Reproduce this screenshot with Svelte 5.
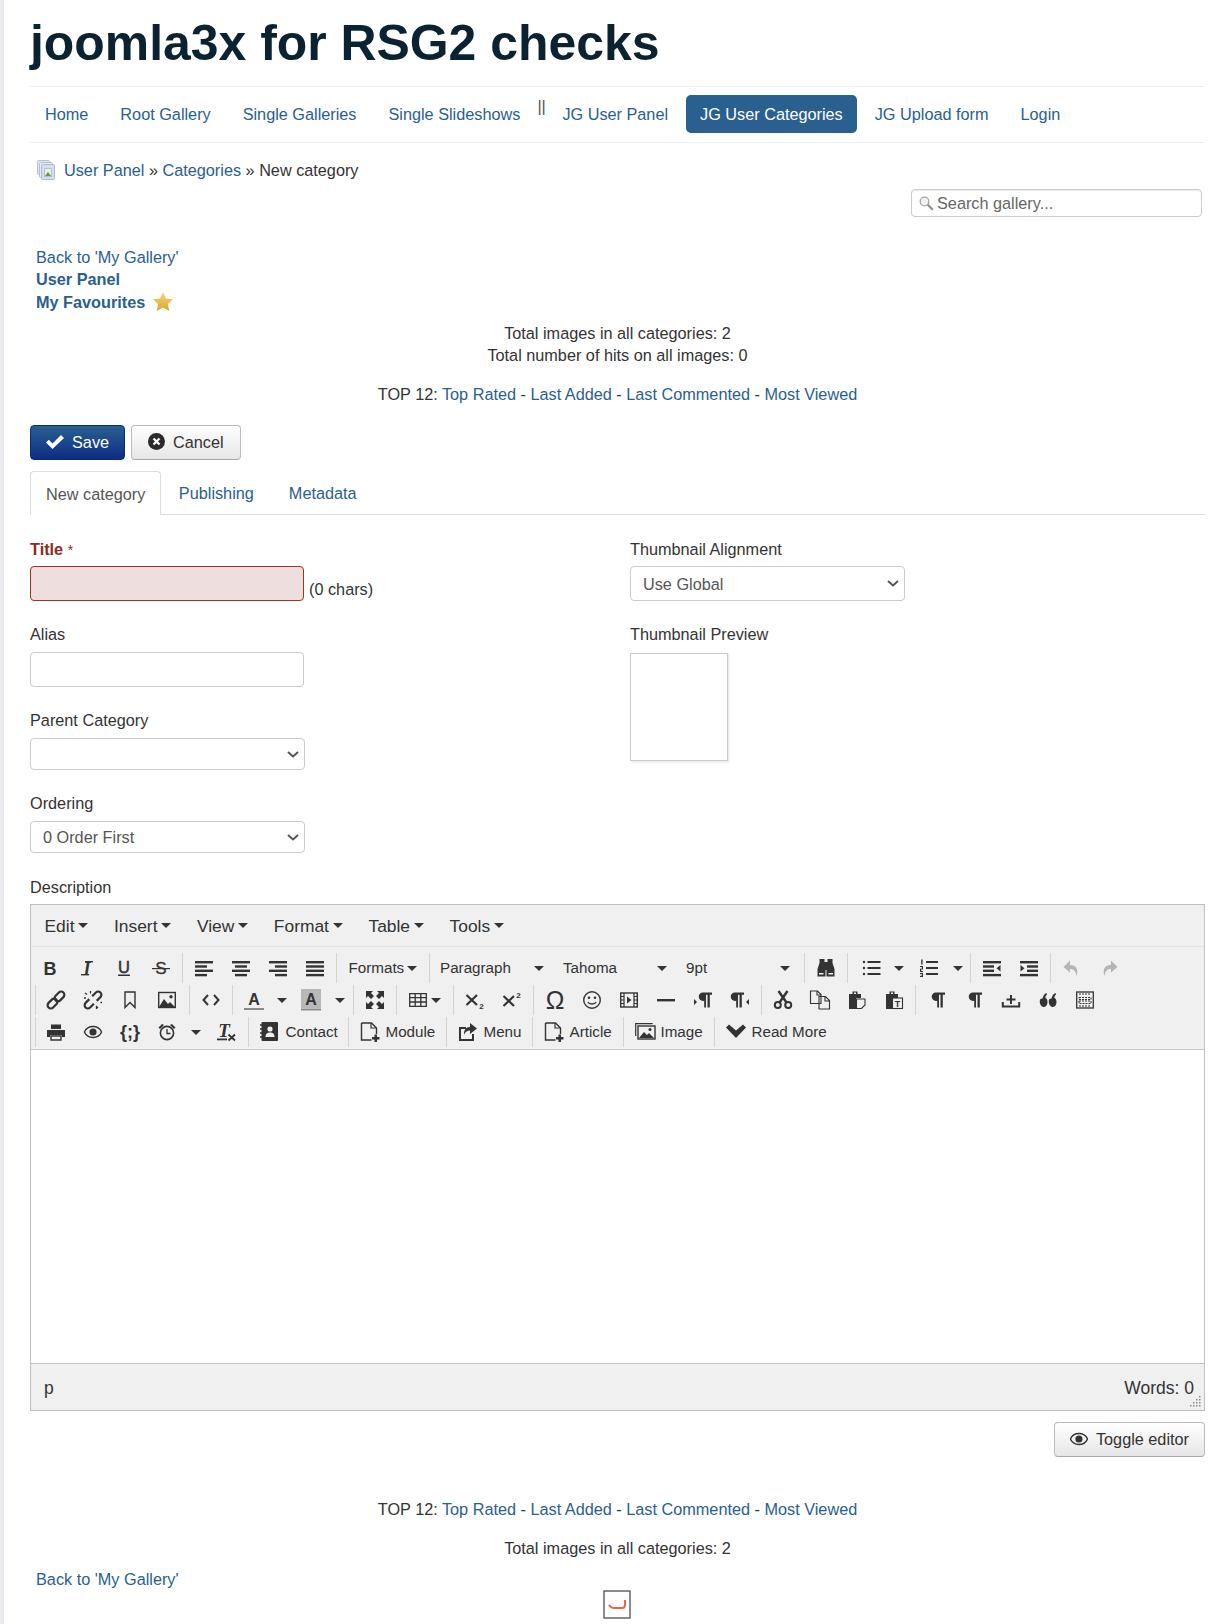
<script>
  const sans = 'font-family="Liberation Sans, Arial, sans-serif"';
  const txt = (s, x, y, size, extra = '') => `<text x="${x}" y="${y}" font-size="${size}" text-anchor="middle" ${sans} ${extra}>${s}</text>`;
  const bars = (rows) => rows.map(([x, y, w, h = 2.4]) => `<rect x="${x}" y="${y}" width="${w}" height="${h}"/>`).join('');
  const doc = '<path d="M1.5 1h10l5 5v6M1.5 1v17h10" fill="none" stroke="#333" stroke-width="1.4"/><path d="M11 1v5h5" fill="none" stroke="#333" stroke-width="1.2"/><path d="M12 15h2.5v-2.5h2.5V15h2.5v2.5H17V20h-2.5v-2.5H12z"/>';
  const chain = '<g transform="rotate(-45 9 9)" fill="none" stroke="#333" stroke-width="2.2"><rect x="-1.5" y="5.8" width="11" height="6.4" rx="3.2"/><rect x="8.5" y="5.8" width="11" height="6.4" rx="3.2"/></g>';
  const pilcrow = '<path d="M7 1.5h10v2.300h-2.200V16.500h-2.300V3.800h-1.500V16.500H9.200V9.800A4.200 4.100 0 0 1 7 1.500z"/>';

  const icons = {
    bold: txt('B', 9, 15.5, 18, 'font-weight="700"'),
    italic: `<text x="9" y="15.5" font-size="18" text-anchor="middle" font-family="Liberation Serif, serif" font-style="italic" font-weight="700">I</text><rect x="3" y="15" width="8" height="1.4"/><rect x="7" y="2" width="8" height="1.4"/>`,
    underline: txt('U', 9, 13.5, 16.5, 'font-weight="400" stroke="#333" stroke-width=".5"') + bars([[3, 15.5, 12, 1.5]]),
    strike: txt('S', 9, 15, 17, 'stroke="#333" stroke-width=".3"') + bars([[0, 9, 18, 1.2]]),
    alignleft: bars([[0, 2, 18], [0, 6.3, 12], [0, 10.6, 18], [0, 14.9, 12]]),
    aligncenter: bars([[0, 2, 18], [3, 6.3, 12], [0, 10.6, 18], [3, 14.9, 12]]),
    alignright: bars([[0, 2, 18], [6, 6.3, 12], [0, 10.6, 18], [6, 14.9, 12]]),
    justify: bars([[0, 2, 18], [0, 6.3, 18], [0, 10.6, 18], [0, 14.9, 18]]),
    binoculars: '<path d="M2.5 0h5v3h3V0h5v4l2 6v7.500h-8V11h-1v6.500H.5V10l2-6z"/><rect x="2" y="14" width="4.500" height="1.500" fill="#f0f0f0"/><rect x="11.500" y="14" width="4.500" height="1.500" fill="#f0f0f0"/>',
    bullist: '<g transform="translate(2.500 0)"><circle cx="1.5" cy="3" r="1.2"/><circle cx="1.5" cy="9" r="1.2"/><circle cx="1.5" cy="15" r="1.2"/>' + bars([[5, 2, 13, 2], [5, 8, 13, 2], [5, 14, 13, 2]]) + '</g>',
    numlist: '<g transform="translate(-1 0)"><rect x="1.2" y="0.5" width="1.4" height="5"/><path d="M0 7h3v3.5H1.2V12H3v1H0V9.8h1.8V8H0zM0 14h3v4H0v-.9h2v-.7H.7v-.7H2v-.8H0z"/>' + bars([[6, 2, 12, 2], [6, 8, 12, 2], [6, 14, 12, 2]]) + '</g>',
    outdent: bars([[0, 2, 18], [0, 6.3, 11], [0, 10.6, 11], [0, 14.9, 18]]) + '<path d="M17.5 6l-4 3.2 4 3.2z"/>',
    indent: bars([[0, 2, 18], [7, 6.3, 11], [7, 10.6, 11], [0, 14.9, 18]]) + '<path d="M.5 6l4 3.2-4 3.2z"/>',
    undo: '<path d="M7 1.5L.5 8 7 13.500V10c3.500 0 5.500 1.500 6.500 7 2-6 .5-11-6.500-11z" fill="#b5b5b5"/>',
    redo: '<path d="M11 1.5L17.500 8 11 13.500V10c-3.500 0-5.500 1.500-6.500 7-2-6-.5-11 6.500-11z" fill="#b5b5b5"/>',
    link: chain,
    unlink: chain + '<path d="M6 6L12 12" stroke="#f0f0f0" stroke-width="4"/><path d="M3 3.5L1 2M6.5 2.5V0M2 7H0M12 15l2 2M12.5 18v-2M16.5 11.5H18" stroke="#333" stroke-width="1.3"/>',
    bookmark: '<path d="M4 1h10v15.5l-5-5-5 5z" fill="none" stroke="#333" stroke-width="1.4"/>',
    image: '<rect x=".7" y="1.5" width="16.6" height="15" fill="none" stroke="#333" stroke-width="1.4"/><path d="M1 16l5-8 4 5 2-2 5 5z"/><circle cx="13" cy="5.8" r="1.7"/>',
    code: '<path d="M6 4L1.5 9 6 14M12 4l4.5 5-4.5 5" fill="none" stroke="#333" stroke-width="2"/>',
    forecolor: txt('A', 9, 14, 16, 'font-weight="700"') + '<rect x="-1" y="17" width="20" height="2" fill="#8a8a8a"/>',
    backcolor: '<rect x="-1" y="-2" width="20" height="19" fill="#b8b8b8"/>' + txt('A', 9, 14, 16, 'font-weight="700"') + '<rect x="-1" y="17.5" width="20" height="2" fill="#8a8a8a"/>',
    fullscreen: '<path d="M0 0h7L5 2l3 3-3 3-3-3-2 2zM18 0v7l-2-2-3 3-3-3 3-3-2-2zM0 18v-7l2 2 3-3 3 3-3 3 2 2zM18 18h-7l2-2-3-3 3-3 3 3 2-2z"/>',
    table: '<path d="M.7 2.7h16.6v12.6H.7zM.7 6.7h16.6M.7 11h16.6M6.2 2.7v12.6M11.8 2.7v12.6" fill="none" stroke="#333" stroke-width="1.3"/>',
    sub: '<path d="M.5 4l10.500 10M11 4L.5 14" stroke="#333" stroke-width="2.200" fill="none"/>' + txt('2', 15.5, 18, 8, 'font-weight="700"'),
    sup: '<path d="M.5 5l10.500 10M11 5L.5 15" stroke="#333" stroke-width="2.200" fill="none"/>' + txt('2', 15.5, 6.5, 8, 'font-weight="700"'),
    omega: txt('Ω', 9, 17.5, 25),
    smile: '<circle cx="9" cy="9" r="8.300" fill="none" stroke="#333" stroke-width="1.4"/><circle cx="6" cy="6.8" r="1.3"/><circle cx="12" cy="6.8" r="1.3"/><path d="M4.8 11c1.4 2.6 7 2.6 8.4 0" fill="none" stroke="#333" stroke-width="1.4"/>',
    media: '<rect x=".7" y="2" width="16.6" height="14" fill="none" stroke="#333" stroke-width="1.4"/><path d="M4 2v14M14 2v14M1 5.5h3M1 9h3M1 12.5h3M14 5.5h3M14 9h3M14 12.5h3" stroke="#333" stroke-width="1.2"/><path d="M7 5.5l4.5 3.5L7 12.5z"/>',
    hr: bars([[0, 8, 18, 2.4]]),
    ltr: '<g transform="translate(1 0)">' + pilcrow + '</g><path d="M0 8l3 3-3 3z"/>',
    rtl: '<g transform="translate(-4 0)">' + pilcrow + '</g><path d="M18 8l-3 3 3 3z"/>',
    cut: '<circle cx="3.8" cy="14" r="3" fill="none" stroke="#333" stroke-width="2"/><circle cx="14.2" cy="14" r="3" fill="none" stroke="#333" stroke-width="2"/><path d="M5.5 11.5L13.500 0M12.5 11.5L4.500 0" stroke="#333" stroke-width="2.400"/>',
    copy: '<path d="M-.5 0h7l3.500 3.500V12.500H-.5zM6 0v4h4M8 5.500h6.500l4 4v8.500H8zM14 5.500v4.500h4.500" fill="none" stroke="#333" stroke-width="1.1"/>',
    paste: '<path d="M1 3h3.500V.5h5V3H13v4H8v11H1z"/><rect x="6" y="1.5" width="2" height="1.500" fill="#f0f0f0"/><path d="M8.500 8H17v6l-3.500 3.500h-5z" fill="#f0f0f0" stroke="#333" stroke-width="1.1"/>',
    pastetext: '<path d="M1 3h3.500V.5h5V3H13v4H8v11H1z"/><rect x="6" y="1.5" width="2" height="1.500" fill="#f0f0f0"/><rect x="7.5" y="7" width="10" height="10.5" fill="#f0f0f0" stroke="#333" stroke-width="1.1"/>' + txt('T', 12.5, 15.5, 9, 'font-family="Liberation Serif" font-weight="700"'),
    ltrmark: pilcrow,
    upload: '<path d="M.8 11v4.5h16.4V11" fill="none" stroke="#333" stroke-width="2"/><path d="M8 4h2v3.5h3.5v2H10V13H8V9.5H4.5v-2H8z"/>',
    quote: '<g transform="translate(0 -1.5) scale(1 1.400)"><path d="M3.500 6.500C4 4.500 5.500 3 7.500 2.500L8 3.500C7 4.200 6.400 5 6.300 6 8 6.200 8.500 7.600 8.500 9 8.500 11 7 12.500 5 12.500 2.500 12.500.5 10.500 .8 8 1 7 2 6.400 3.500 6.500zM12.500 6.500C13 4.500 14.500 3 16.500 2.500L17 3.500C16 4.200 15.400 5 15.300 6 17 6.200 17.500 7.600 17.500 9 17.500 11 16 12.500 14 12.500 11.500 12.500 9.500 10.500 9.800 8 10 7 11 6.400 12.500 6.500z"/></g>',
    template: '<rect x=".7" y="1" width="16.6" height="16" fill="none" stroke="#333" stroke-width="1.3"/><path d="M3 3h12M3 15h12M3 6.500h12v2H3zM3 10h12v2.500H3z" fill="none" stroke="#333" stroke-width="1" stroke-dasharray="2 1"/>',
    print: '<path d="M4 1.5h10v4.500H4z"/><path d="M0 7h18v7h-3v-2H3v2H0z"/><path d="M4 13h10v4H4z" fill="#f0f0f0" stroke="#333" stroke-width="1.4"/>',
    eye: '<path d="M9 3.5C5 3.5 1.8 6 .4 9 1.8 12 5 14.5 9 14.5S16.2 12 17.6 9C16.2 6 13 3.5 9 3.5z" fill="none" stroke="#333" stroke-width="1.4"/><circle cx="9" cy="9" r="3.6"/>',
    braces: txt('{;}', 9, 15, 18, 'font-weight="700"'),
    clock: '<circle cx="9" cy="10" r="6.6" fill="none" stroke="#333" stroke-width="1.6"/><path d="M9 6v4.5h3.5" fill="none" stroke="#333" stroke-width="1.3"/><path d="M.5 4.5L4 1l2 1-4 4zM17.5 4.5L14 1l-2 1 4 4z"/>',
    clear: `<text x="7" y="14" font-size="19" text-anchor="middle" font-family="Liberation Serif, serif" font-style="italic" font-weight="700">T</text><rect x="0" y="15.5" width="10" height="1.8"/><path d="M11.500 11.500l6.500 6M18 11.500l-6.500 6" stroke="#333" stroke-width="1.8"/>`,
    contact: '<rect x="1.5" y="0" width="16.5" height="19" rx="1"/><path d="M0 3h2M0 7h2M0 11h2M0 15h2" stroke="#333" stroke-width="1.4"/><circle cx="10" cy="7" r="2.6" fill="#f0f0f0"/><path d="M5.5 15c0-3.6 2-4.6 4.5-4.6s4.5 1 4.5 4.6z" fill="#f0f0f0"/>',
    doc,
    menu: '<path d="M1 5h7v2H3v10h11v-5h2v7H1z"/><path d="M12 1l7 5.5-7 5.5V8.5C9 8.5 7 10 6 13c-.3-5 2-8 6-8z"/>',
    images: '<rect x="3" y="4" width="17" height="13" fill="none" stroke="#333" stroke-width="1.4"/><path d="M.7 14V1.7h17" fill="none" stroke="#333" stroke-width="1.2"/><path d="M4 16l5-6 3 3 2-2 5 5z"/><circle cx="15" cy="7.5" r="1.5"/>',
    readmore: '<path d="M0 5.5l3-3 7 6 7-6 3 3-10 10.500z"/>'
  };

  const rows = [
    [
      ['bold', 'italic', 'underline', 'strike'],
      ['alignleft', 'aligncenter', 'alignright', 'justify'],
      [{ t: 'Formats', w: 87, tight: true }],
      [{ t: 'Paragraph', w: 123 }, { t: 'Tahoma', w: 123 }, { t: '9pt', w: 123 }],
      ['binoculars'],
      ['bullist', { c: 24 }, 'numlist', { c: 19 }],
      ['outdent', 'indent'],
      ['undo', 'redo']
    ],
    [
      ['link', 'unlink', 'bookmark', 'image'],
      ['code'],
      ['forecolor', { c: 20 }, 'backcolor', { c: 21 }],
      ['fullscreen'],
      [{ i: 'table', caret: true }],
      ['sub', 'sup'],
      ['omega', 'smile', 'media', 'hr', 'ltr', 'rtl'],
      ['cut', 'copy', 'paste', 'pastetext'],
      ['ltrmark', 'ltrmark', 'upload', 'quote', 'template']
    ],
    [
      ['print', 'eye', 'braces', 'clock', { c: 22 }, 'clear'],
      [{ b: 'contact', t: 'Contact', w: 94 }],
      [{ b: 'doc', t: 'Module', w: 92 }],
      [{ b: 'menu', t: 'Menu', w: 80 }],
      [{ b: 'doc', t: 'Article', w: 85 }],
      [{ b: 'images', t: 'Image', w: 85 }],
      [{ b: 'readmore', t: 'Read More', w: 120 }]
    ]
  ];

  const menus = ['Edit', 'Insert', 'View', 'Format', 'Table', 'Tools'];
  const navItems = ['Home', 'Root Gallery', 'Single Galleries', 'Single Slideshows'];
  const navItems2 = ['JG User Panel', 'JG User Categories', 'JG Upload form', 'Login'];
</script>

<div class="page">
  <h1>joomla3x for RSG2 checks</h1>

  <nav class="nav">
    {#each navItems as item}
      <a href="#top">{item}</a>
    {/each}
    <span class="pipes">||</span>
    {#each navItems2 as item}
      <a href="#top" class:active={item === 'JG User Categories'}>{item}</a>
    {/each}
  </nav>

  <div class="crumbs">
    <svg class="crumb-icon" viewBox="0 0 18 20" width="18" height="20">
      <rect x="0.5" y="0.5" width="12" height="14" rx="1" fill="#dfe5f2" stroke="#b4c0da"/>
      <rect x="2.5" y="2.5" width="13" height="15" rx="1" fill="#e6ebf6" stroke="#b4c0da"/>
      <rect x="4.5" y="4.5" width="13" height="15" rx="1" fill="#d5deef" stroke="#aebbd6"/>
      <rect x="7.5" y="8.5" width="7" height="8" fill="#e9efe4" stroke="#b9c4ae"/>
      <path d="M8 16l3-4 3 4z" fill="#5f9a3c"/>
    </svg>
    <span><a href="#top">User Panel</a> » <a href="#top">Categories</a> » New category</span>
  </div>

  <div class="search-row">
    <div class="search">
      <svg viewBox="0 0 15 15" width="15" height="15">
        <circle cx="5.5" cy="5.5" r="4.3" fill="#f4f4f4" stroke="#a5a5a5" stroke-width="1.3"/>
        <path d="M8.8 8.8l5 5" stroke="#8f8f8f" stroke-width="2.2"/>
      </svg>
      <input type="text" placeholder="Search gallery..." />
    </div>
  </div>

  <div class="quick">
    <a href="#top">Back to 'My Gallery'</a>
    <a href="#top" class="strong">User Panel</a>
    <div class="fav">
      <a href="#top" class="strong">My Favourites</a>
      <svg viewBox="0 0 20 19" width="20" height="19">
        <defs>
          <linearGradient id="star" x1="0" y1="0" x2="0" y2="1">
            <stop offset="0" stop-color="#f7d774" />
            <stop offset="1" stop-color="#dba62e" />
          </linearGradient>
        </defs>
        <path d="M10 0l3 6.4 7 .9-5.1 4.8 1.3 6.9-6.2-3.4L3.800 19l1.300-6.900L0 7.300l7-.9z" fill="url(#star)" />
      </svg>
    </div>
  </div>

  <div class="stats">
    <div>Total images in all categories: 2</div>
    <div>Total number of hits on all images: 0</div>
  </div>

  <div class="top12">TOP 12: <a href="#top">Top Rated</a> - <a href="#top">Last Added</a> - <a href="#top">Last Commented</a> - <a href="#top">Most Viewed</a></div>

  <div class="actions">
    <button class="btn primary">
      <svg viewBox="0 0 18 14" width="18" height="14"><path d="M0 7.500l2.800-2.800 3.700 3.700L15 0l3 3L6.500 14z" fill="#fff" /></svg>
      Save
    </button>
    <button class="btn cancel">
      <svg viewBox="0 0 17 17" width="17" height="17">
        <circle cx="8.500" cy="8.500" r="8.500" fill="#2b2b2b" />
        <path d="M5.500 5.500l6 6M11.500 5.500l-6 6" stroke="#fff" stroke-width="2.200" />
      </svg>
      Cancel
    </button>
  </div>

  <div class="tabs">
    <span class="tab current">New category</span>
    <a href="#top" class="tab">Publishing</a>
    <a href="#top" class="tab">Metadata</a>
  </div>

  <div class="form">
    <div class="col">
      <label class="first invalid" for="title">Title <span class="req">*</span></label>
      <div class="title-row">
        <input id="title" class="invalid-input" type="text" />
        <span class="chars">(0 chars)</span>
      </div>

      <label for="alias">Alias</label>
      <input id="alias" type="text" />

      <label for="parent">Parent Category</label>
      <select id="parent" class="short"><option></option></select>

      <label for="ordering">Ordering</label>
      <select id="ordering" class="short"><option>0 Order First</option></select>
    </div>

    <div class="col">
      <label class="first" for="align">Thumbnail Alignment</label>
      <select id="align" class="tall"><option>Use Global</option></select>

      <div class="field-label preview-label">Thumbnail Preview</div>
      <div class="preview"></div>
    </div>
  </div>

  <div class="field-label desc">Description</div>

  <div class="editor">
    <div class="menubar">
      {#each menus as menu}
        <span class="menu">{menu}<i class="caret"></i></span>
      {/each}
    </div>

    <div class="toolbar">
      {#each rows as row, r}
        <div class="tool-row" class:offset={r > 0}>
          {#each row as group, g}
            <div class="grp" class:lined={r > 0 || g > 0}>
              {#each group as item}
                {#if typeof item === 'string'}
                  <span class="tb"><svg viewBox="0 0 18 18" width="18" height="18" fill="#333">{@html icons[item]}</svg></span>
                {:else if item.c}
                  <span class="tb-caret" style="width:{item.c}px"><i class="caret"></i></span>
                {:else if item.i}
                  <span class="tb wide"><svg viewBox="0 0 18 18" width="18" height="18" fill="#333">{@html icons[item.i]}</svg><i class="caret"></i></span>
                {:else if item.b}
                  <span class="tb-label" style="width:{item.w}px"><svg viewBox="0 0 20 20" width="20" height="20" fill="#333">{@html icons[item.b]}</svg>{item.t}</span>
                {:else}
                  <span class="tb-list" class:tight={item.tight} style="width:{item.w}px">{item.t}<i class="caret"></i></span>
                {/if}
              {/each}
            </div>
          {/each}
        </div>
      {/each}
    </div>

    <div class="edit-area"></div>

    <div class="statusbar">
      <span>p</span>
      <span>Words: 0</span>
      <svg class="grip" viewBox="0 0 12 12" width="12" height="12" fill="#8b8b8b">
        <rect x="10" y="1" width="1.500" height="1.500" />
        <rect x="7" y="4" width="1.500" height="1.500" /><rect x="10" y="4" width="1.500" height="1.500" />
        <rect x="4" y="7" width="1.500" height="1.500" /><rect x="7" y="7" width="1.500" height="1.500" /><rect x="10" y="7" width="1.500" height="1.500" />
        <rect x="1" y="10" width="1.500" height="1.500" /><rect x="4" y="10" width="1.500" height="1.500" /><rect x="7" y="10" width="1.500" height="1.500" /><rect x="10" y="10" width="1.500" height="1.500" />
      </svg>
    </div>
  </div>

  <div class="toggle-row">
    <button class="btn toggle">
      <svg viewBox="0 0 18 18" width="18" height="18" fill="#333">{@html icons.eye}</svg>
      Toggle editor
    </button>
  </div>

  <div class="top12 bottom">TOP 12: <a href="#top">Top Rated</a> - <a href="#top">Last Added</a> - <a href="#top">Last Commented</a> - <a href="#top">Most Viewed</a></div>
  <div class="stats total">Total images in all categories: 2</div>
  <div class="back"><a href="#top">Back to 'My Gallery'</a></div>

  <div class="badge">
    <svg viewBox="0 0 28 29" width="28" height="29">
      <rect x="1" y="1" width="26" height="27" fill="#fff" stroke="#666" stroke-width="1.500" />
      <path d="M6 15q2 3 5 3h8q3 0 3-3v-5" fill="none" stroke="#f0634a" stroke-width="2" />
    </svg>
  </div>
</div>

<style>
  :global(body) {
    margin: 0;
    background: #fff;
  }

  .page {
    box-sizing: border-box;
    height: 1624px;
    overflow: hidden;
    border-left: 4px solid #e9eaee;
    padding: 0 24px 0 26px;
    font: 16.25px/22px "Liberation Sans", Arial, sans-serif;
    color: #333;
  }

  a { color: #2a6090; text-decoration: none; }

  h1 {
    margin: 0;
    height: 86px;
    font-size: 49.9px;
    line-height: 86px;
    font-weight: 700;
    color: #0b2231;
    white-space: nowrap;
  }

  .nav {
    display: flex;
    gap: 4px;
    box-sizing: border-box;
    height: 57px;
    padding: 8px 0 0 1px;
    border-top: 1px solid #eee;
    border-bottom: 1px solid #eee;
  }
  .nav a {
    height: 38px;
    line-height: 38px;
    padding: 0 14px;
    border-radius: 5px;
  }
  .nav a.active { background: #2a6090; color: #fff; }
  .pipes { line-height: 22px; margin: 0 -1px 0 -1px; width: 8px; text-align: center; color: #555; }

  .crumbs {
    display: flex;
    align-items: center;
    gap: 5px;
    margin-top: 16px;
    padding-left: 7px;
    white-space: pre;
  }
  .crumb-icon { margin-right: 4px; }

  .search-row { display: flex; justify-content: flex-end; margin-top: 8px; padding-right: 3px; }
  .search {
    box-sizing: border-box;
    display: flex;
    align-items: center;
    gap: 3px;
    width: 291px;
    height: 28px;
    padding-left: 7px;
    border: 1px solid #ccc;
    border-radius: 4px;
    box-shadow: inset 0 1px 1px rgba(0, 0, 0, .08);
  }
  .search input[type='text'] {
    flex: 1;
    min-width: 0;
    border: 0;
    outline: 0;
    padding: 0;
    font: inherit;
    background: transparent;
  }
  .search input::placeholder { color: #666; opacity: 1; }

  .quick { display: flex; flex-direction: column; margin-top: 29px; padding-left: 6px; }
  .strong { font-weight: 700; }
  .fav { display: flex; align-items: center; gap: 8px; height: 23px; }

  .stats { margin-top: 9px; text-align: center; }
  .top12 { margin-top: 17px; text-align: center; }

  .actions { display: flex; gap: 6px; margin-top: 20px; }
  .btn {
    box-sizing: border-box;
    display: inline-flex;
    align-items: center;
    gap: 8px;
    height: 35px;
    padding: 0 15px 2px;
    border: 1px solid #bbb;
    border-bottom-color: #a8a8a8;
    border-radius: 4px;
    background: linear-gradient(#fff, #e6e6e6);
    font: inherit;
    color: #333;
    white-space: nowrap;
  }
  .btn.primary {
    border-color: #0e2a70;
    background: linear-gradient(#2a6090, #0c2d84);
    color: #fff;
  }
  .btn.cancel { padding: 0 16px 2px; }

  .tabs {
    display: flex;
    box-sizing: border-box;
    height: 44px;
    margin-top: 11px;
    border-bottom: 1px solid #ddd;
  }
  .tab { box-sizing: border-box; height: 44px; padding: 0 15px; line-height: 44px; }
  a.tab { padding: 0 17.5px; }
  .tab.current {
    border: 1px solid #ddd;
    border-bottom: 0;
    border-radius: 4px 4px 0 0;
    background: #fff;
    color: #555;
  }

  .form { display: grid; grid-template-columns: 600px 1fr; margin-top: 23px; }
  .col { display: flex; flex-direction: column; align-items: flex-start; }
  label, .field-label { display: block; margin: 22px 0 7px; height: 22px; line-height: 23px; }
  label.first { margin: 0 0 6px; }
  .invalid { color: #8c2a1c; font-weight: 700; }
  .req { font-weight: 400; font-size: 14px; }

  input[type='text'], select {
    box-sizing: border-box;
    font: inherit;
    color: #555;
    background-color: #fff;
    border: 1px solid #ccc;
    border-radius: 4px;
  }
  .col input[type='text'] { width: 274px; height: 35px; padding: 0 12px; }
  select {
    width: 275px;
    padding: 0 24px 0 12px;
    appearance: none;
    background-image: url("data:image/svg+xml,%3Csvg xmlns='http://www.w3.org/2000/svg' width='12' height='7'%3E%3Cpath d='M1 1l5 4.500 5-4.500' fill='none' stroke='%23555' stroke-width='2'/%3E%3C/svg%3E");
    background-repeat: no-repeat;
    background-position: right 5px center;
  }
  select.short { height: 32px; }
  select.tall { height: 35px; padding-top: 1px; }
  .title-row { display: flex; align-items: flex-end; gap: 5px; }
  .col input.invalid-input { background: #eedede; border-color: #9c3324; }
  .chars { line-height: 24px; }

  .preview {
    box-sizing: border-box;
    width: 98px;
    height: 108px;
    border: 1px solid #ccc;
    box-shadow: 1px 1px 2px rgba(0, 0, 0, .1);
  }
  .preview-label { margin-bottom: 8px; }

  .field-label.desc { margin: 23px 0 6px; }

  .editor {
    box-sizing: border-box;
    height: 507px;
    display: flex;
    flex-direction: column;
    border: 1px solid #c0c0c0;
    background: #f0f0f0;
  }
  .menubar {
    display: flex;
    align-items: center;
    gap: 25.5px;
    flex: none;
    box-sizing: border-box;
    height: 42px;
    padding-left: 13.5px;
    border-bottom: 1px solid #e4e4e4;
    font-size: 17.4px;
  }
  .menu { display: inline-flex; align-items: center; gap: 4px; }
  .caret {
    display: inline-block;
    width: 0;
    height: 0;
    border-left: 5px solid transparent;
    border-right: 5px solid transparent;
    border-top: 5px solid #333;
  }

  .toolbar {
    flex: none;
    display: flex;
    flex-direction: column;
    gap: 2px;
    height: 103px;
    box-sizing: border-box;
    padding-top: 6px;
    border-bottom: 1px solid #c8c8c8;
  }
  .tool-row { display: flex; height: 30px; }
  .tool-row.offset { margin-left: 4px; }
  .grp { display: flex; align-items: center; padding: 0 3px 0 2px; flex: none; }
  .tool-row .grp:first-child { padding: 0 3px 0 0; }
  .tool-row.offset .grp:first-child { padding: 0 4px 0 1px; }
  .grp.lined { border-left: 1px solid #d4d4d4; }
  .tb, .tb-caret, .tb-label, .tb-list {
    box-sizing: border-box;
    display: inline-flex;
    align-items: center;
    justify-content: center;
    height: 30px;
    flex: none;
    white-space: nowrap;
    font-size: 15.2px;
  }
  .tb { width: 37px; }
  .tb svg, .tb-label svg { overflow: visible; }
  .tb.wide { width: 51px; gap: 4px; justify-content: flex-start; padding-left: 10px; }
  .tb-label { justify-content: flex-start; gap: 6px; padding-left: 8.5px; }
  .tb-list { justify-content: space-between; padding: 0 11px 0 8px; }
  .tb-list.tight { padding: 0 9px 0 9.5px; }

  .edit-area { flex: 1; background: #fff; }

  .statusbar {
    position: relative;
    flex: none;
    box-sizing: border-box;
    display: flex;
    justify-content: space-between;
    align-items: center;
    height: 47px;
    padding: 1px 10px 0 13px;
    border-top: 1px solid #c0c0c0;
    font-size: 17.5px;
  }
  .grip { position: absolute; right: 3px; bottom: 3px; }

  .toggle-row { display: flex; justify-content: flex-end; margin-top: 11px; }
  .btn.toggle { width: 151px; }

  .top12.bottom { margin-top: 41px; }
  .stats.total { margin-top: 17px; }
  .back { margin-top: 9px; padding-left: 6px; }
  .badge { display: flex; justify-content: center; padding-right: 2px; }
</style>
